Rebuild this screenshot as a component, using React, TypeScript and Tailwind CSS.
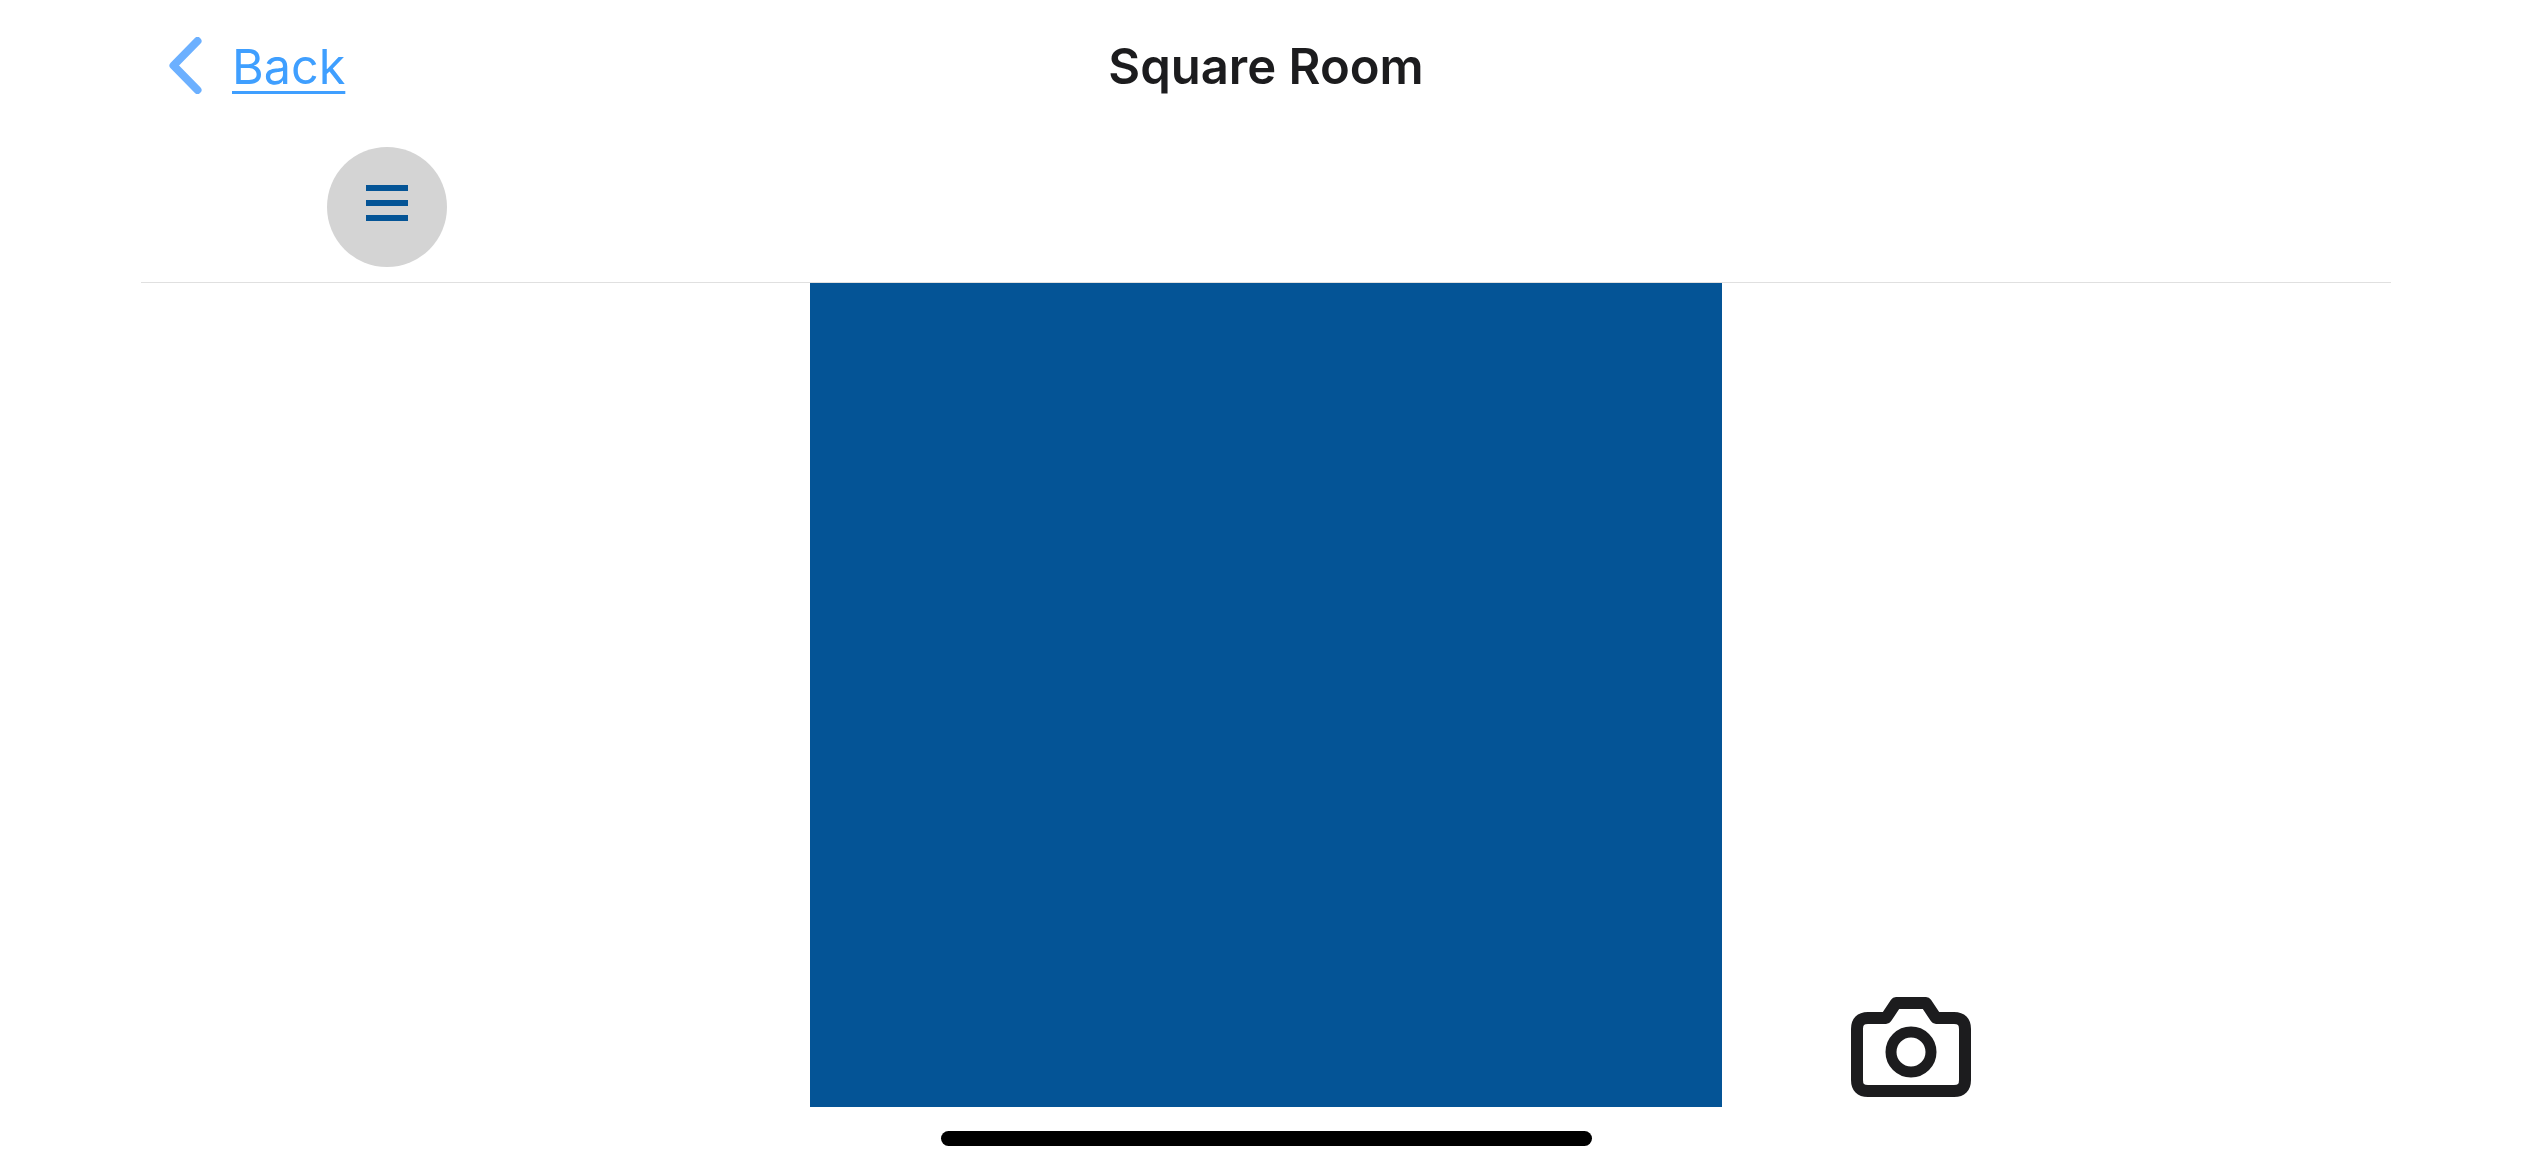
import React from 'react';

const ChevronLeft = () => (
  <svg width="33" height="57" viewBox="0 0 33 57" fill="none" stroke="#6cb0ff" strokeWidth="8" strokeLinecap="round" strokeLinejoin="round">
    <path d="M28.500 4 L4.500 28.500 L28.500 53" />
  </svg>
);

const CameraIcon = () => (
  <svg width="120" height="101" viewBox="0 0 120 101" fill="none" stroke="#1c1c1e" strokeWidth="12" strokeLinejoin="round">
    <path d="M17 22 H35 L45 7 H75 L85 22 H103 Q114 22 114 33 V84 Q114 95 103 95 H17 Q6 95 6 84 V33 Q6 22 17 22 Z" />
    <circle cx="60" cy="56" r="20" strokeWidth="11" />
  </svg>
);

const App: React.FC = () => {
  return (
    <div className="flex h-[1170px] w-[2532px] flex-col overflow-hidden bg-white font-['Inter',sans-serif]">
      <header className="mx-[141px] border-b border-[#e0e0e0]">
        <div className="relative flex h-[132px] items-center justify-center">
          <a className="absolute left-[28px] top-[37px] flex items-start gap-[30px] text-[#3f9fff]">
            <ChevronLeft />
            <span className="pt-[3px] text-[48.500px] leading-[53px] underline decoration-[3px] underline-offset-[7px]">Back</span>
          </a>
          <h1 className="text-[49px] font-semibold leading-none text-[#1c1c1e]">Square Room</h1>
        </div>
        <div className="pb-[15px] pl-[186px] pt-[15px]">
          <button className="flex h-[120px] w-[120px] flex-col items-center justify-center gap-[9px] rounded-full bg-[#d4d4d4] pb-[8px]">
            <span className="h-[6px] w-[42px] bg-[#045496]" />
            <span className="h-[6px] w-[42px] bg-[#045496]" />
            <span className="h-[6px] w-[42px] bg-[#045496]" />
          </button>
        </div>
      </header>
      <main className="relative flex justify-center">
        <div className="h-[824px] w-[912px] bg-[#045496]" />
        <button className="absolute bottom-[10px] left-[1851px]">
          <CameraIcon />
        </button>
      </main>
      <div className="mt-[24px] flex justify-center">
        <div className="h-[15px] w-[651px] rounded-full bg-black" />
      </div>
    </div>
  );
};

export default App;
